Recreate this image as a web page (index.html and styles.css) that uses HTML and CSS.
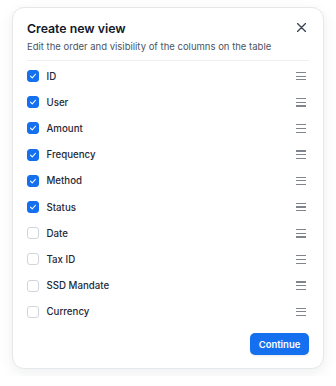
FILE: index.html
```html
<!DOCTYPE html>
<html>
<head>
<meta charset="utf-8">
<link rel="stylesheet" href="styles.css">
</head>
<body>
<div class="card">
  <div class="header">
    <h1 class="title">Create new view</h1>
    <button class="close" aria-label="Close">
      <svg width="9" height="9" viewBox="0 0 9 9"><path d="M0.5 0.5L8.5 8.5M8.5 0.5L0.5 8.5" stroke="#374151" stroke-width="1.3" stroke-linecap="round"/></svg>
    </button>
  </div>
  <p class="subtitle">Edit the order and visibility of the columns on the table</p>
  <ul class="list">
    <li class="row"><span class="check on"><svg viewBox="0 0 12 12"><path d="M3 6.2L5.1 8.2L9 3.9" fill="none" stroke="#fff" stroke-width="1.3" stroke-linecap="round" stroke-linejoin="round"/></svg></span><span class="label">ID</span><span class="handle"><i></i><i></i><i></i></span></li>
    <li class="row"><span class="check on"><svg viewBox="0 0 12 12"><path d="M3 6.2L5.1 8.2L9 3.9" fill="none" stroke="#fff" stroke-width="1.3" stroke-linecap="round" stroke-linejoin="round"/></svg></span><span class="label">User</span><span class="handle"><i></i><i></i><i></i></span></li>
    <li class="row"><span class="check on"><svg viewBox="0 0 12 12"><path d="M3 6.2L5.1 8.2L9 3.9" fill="none" stroke="#fff" stroke-width="1.3" stroke-linecap="round" stroke-linejoin="round"/></svg></span><span class="label">Amount</span><span class="handle"><i></i><i></i><i></i></span></li>
    <li class="row"><span class="check on"><svg viewBox="0 0 12 12"><path d="M3 6.2L5.1 8.2L9 3.9" fill="none" stroke="#fff" stroke-width="1.3" stroke-linecap="round" stroke-linejoin="round"/></svg></span><span class="label">Frequency</span><span class="handle"><i></i><i></i><i></i></span></li>
    <li class="row"><span class="check on"><svg viewBox="0 0 12 12"><path d="M3 6.2L5.1 8.2L9 3.9" fill="none" stroke="#fff" stroke-width="1.3" stroke-linecap="round" stroke-linejoin="round"/></svg></span><span class="label">Method</span><span class="handle"><i></i><i></i><i></i></span></li>
    <li class="row"><span class="check on"><svg viewBox="0 0 12 12"><path d="M3 6.2L5.1 8.2L9 3.9" fill="none" stroke="#fff" stroke-width="1.3" stroke-linecap="round" stroke-linejoin="round"/></svg></span><span class="label">Status</span><span class="handle"><i></i><i></i><i></i></span></li>
    <li class="row"><span class="check"></span><span class="label">Date</span><span class="handle"><i></i><i></i><i></i></span></li>
    <li class="row"><span class="check"></span><span class="label">Tax ID</span><span class="handle"><i></i><i></i><i></i></span></li>
    <li class="row"><span class="check"></span><span class="label">SSD Mandate</span><span class="handle"><i></i><i></i><i></i></span></li>
    <li class="row"><span class="check"></span><span class="label">Currency</span><span class="handle"><i></i><i></i><i></i></span></li>
  </ul>
  <div class="footer">
    <button class="primary">Continue</button>
  </div>
</div>
</body>
</html>
```

FILE: styles.css
```css
* { box-sizing: border-box; }
html, body { margin: 0; padding: 0; background: #ffffff; }
body {
  font-family: Inter, "Noto Sans", sans-serif;
  color: #111827;
  padding: 7px 12px;
}
.card {
  width: 312px;
  height: 362px;
  background: #fff;
  border: 1px solid #e5e7eb;
  border-radius: 12px;
  box-shadow: 0 4px 14px rgba(17, 24, 39, 0.07);
  padding: 12px 14px 13px 14px;
  display: flex;
  flex-direction: column;
}
.header {
  display: flex;
  align-items: center;
  justify-content: space-between;
  height: 18px;
}
.title {
  margin: 0;
  font-size: 12.3px;
  font-weight: 600;
  line-height: 18px;
  color: #111827;
}
.close {
  border: 0;
  background: none;
  padding: 0;
  margin-right: 3px;
  margin-top: -3px;
  width: 9px;
  height: 9px;
  display: flex;
}
.subtitle {
  margin: 1px 0 0 0;
  font-size: 9.5px;
  line-height: 15px;
  color: #4b5563;
  padding-bottom: 6px;
  border-bottom: 1px solid #eef0f3;
}
.list {
  list-style: none;
  margin: 0;
  padding: 2px 0 0 0;
}
.row {
  display: flex;
  align-items: center;
  height: 26.2px;
}
.check {
  width: 12px;
  height: 12px;
  border-radius: 3px;
  border: 1px solid #d1d5db;
  background: #fff;
  margin-right: 7.5px;
  display: flex;
}
.check.on {
  background: #1570ef;
  border-color: #1570ef;
}
.check svg { width: 10px; height: 10px; }
.label {
  flex: 1;
  font-size: 9.7px;
  font-weight: 500;
  color: #1f2937;
}
.handle {
  width: 10px;
  display: flex;
  flex-direction: column;
  gap: 2.5px;
  margin-right: 3px;
}
.handle i {
  display: block;
  height: 1.2px;
  background: #80848d;
}
.footer {
  margin-top: auto;
  display: flex;
  justify-content: flex-end;
}
.primary {
  border: 0;
  background: #1570ef;
  color: #fff;
  font-family: Inter, "Noto Sans", sans-serif;
  font-size: 9.5px;
  font-weight: 600;
  height: 22px;
  width: 59px;
  border-radius: 5px;
  padding: 0;
  box-shadow: 0 1px 2px rgba(16, 24, 40, 0.1);
}
```
